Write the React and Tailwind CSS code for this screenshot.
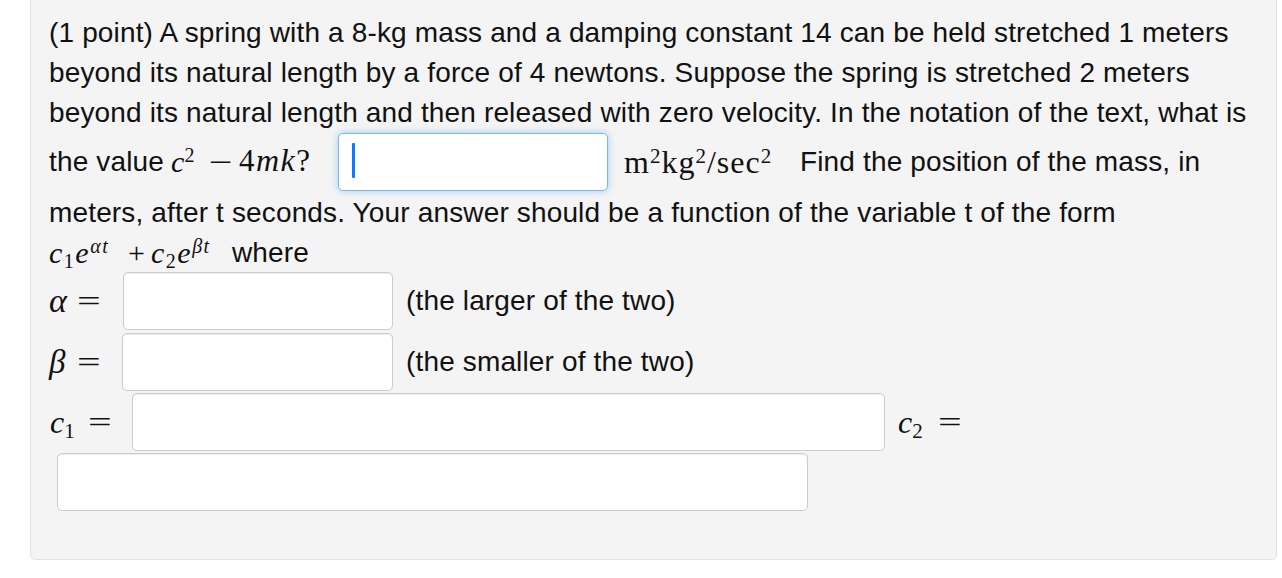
import React from "react";

function Inp({ w, focused, className = "" }) {
  return (
    <div
      className={
        "relative shrink-0 h-[58px] bg-white rounded-[5px] border " +
        (focused
          ? "border-[#7cb6ec] shadow-[0_0_7px_rgba(82,168,236,0.55)] "
          : "border-[#cccccc] shadow-[inset_0_1px_1px_rgba(0,0,0,0.075)] ") +
        className
      }
      style={{ width: w }}
    >
      {focused && (
        <div className="absolute left-[13px] top-[9px] w-[3px] h-[35px] rounded-[1px] bg-[#0a7aff]" />
      )}
    </div>
  );
}

const M = ({ children, className = "" }) => (
  <span className={"shrink-0 font-['Liberation_Serif',serif] italic text-[30px] leading-none " + className}>
    {children}
  </span>
);
const R = ({ children, className = "" }) => (
  <span className={"shrink-0 font-['Liberation_Serif',serif] text-[30px] leading-none " + className}>
    {children}
  </span>
);
const Op = ({ children, className = "" }) => (
  <span className={"shrink-0 font-['Liberation_Serif',serif] text-[30px] leading-none " + className}>
    <span className="inline-block scale-x-[1.4] origin-left">{children}</span>
  </span>
);

export default function App() {
  return (
    <div className="w-[1282px] h-[578px] bg-white overflow-hidden font-['Liberation_Sans',Arial,sans-serif] text-[#111] text-[28px] tracking-[0.15px] leading-[40px]">
      <div className="ml-[30px] w-[1247px] h-[560px] bg-[#f4f4f4] border border-t-0 border-[#e2e2e2] rounded-b-[5px] pl-[18px] pt-[13px]">
        <div className="whitespace-nowrap">
          (1 point) A spring with a 8-kg mass and a damping constant 14 can be held stretched 1 meters
        </div>
        <div className="whitespace-nowrap">
          beyond its natural length by a force of 4 newtons. Suppose the spring is stretched 2 meters
        </div>
        <div className="whitespace-nowrap">
          beyond its natural length and then released with zero velocity. In the notation of the text, what is
        </div>
        <div className="flex items-center h-[62px] -mt-[2px] whitespace-nowrap">
          <span className="w-[121px] shrink-0">the value</span>
          <M className="w-[39px] pl-[1px]">
            c<sup className="not-italic text-[20px]">2</sup>
          </M>
          <Op className="w-[30px]">−</Op>
          <span className="w-[99px] shrink-0 tracking-[1.5px]">
            <R className="text-[31px]">4</R>
            <M className="text-[32px]">mk</M>
            <R className="text-[31px]">?</R>
          </span>
          <Inp w={270} focused />
          <R className="ml-[16px] w-[176px] text-[32px] tracking-[1px]">
            m<sup className="text-[21px]">2</sup>kg<sup className="text-[21px]">2</sup>/sec
            <sup className="text-[21px]">2</sup>
          </R>
          <span>Find the position of the mass, in</span>
        </div>
        <div className="whitespace-nowrap">
          meters, after t seconds. Your answer should be a function of the variable t of the form
        </div>
        <div className="flex items-center h-[40px] whitespace-nowrap">
          <M className="w-[79px] tracking-[1.5px]">
            c<sub className="not-italic text-[20px]">1</sub>e<sup className="text-[20px]">αt</sup>
          </M>
          <R className="w-[23px]">+</R>
          <M className="w-[81px] tracking-[1.5px]">
            c<sub className="not-italic text-[20px]">2</sub>e<sup className="text-[20px]">βt</sup>
          </M>
          <span>where</span>
        </div>
        <div className="flex items-center h-[60px] -mt-[2px] whitespace-nowrap">
          <M className="w-[28px] text-[34px]">α</M>
          <Op className="w-[46px]">=</Op>
          <Inp w={270} />
          <span className="ml-[13px]">(the larger of the two)</span>
        </div>
        <div className="flex items-center h-[60px] mt-[1px] whitespace-nowrap">
          <M className="w-[28px] text-[33px]">β</M>
          <Op className="w-[45px]">=</Op>
          <Inp w={271} />
          <span className="ml-[13px]">(the smaller of the two)</span>
        </div>
        <div className="flex items-center h-[60px] whitespace-nowrap">
          <M className="w-[39px] pl-[1px] text-[32px]">
            c<sub className="not-italic text-[21px]">1</sub>
          </M>
          <Op className="w-[44px]">=</Op>
          <Inp w={753} />
          <M className="ml-[13px] w-[40px] text-[32px]">
            c<sub className="not-italic text-[21px]">2</sub>
          </M>
          <Op>=</Op>
        </div>
        <div className="flex items-center h-[60px] whitespace-nowrap">
          <Inp w={751} className="ml-[8px]" />
        </div>
      </div>
    </div>
  );
}
